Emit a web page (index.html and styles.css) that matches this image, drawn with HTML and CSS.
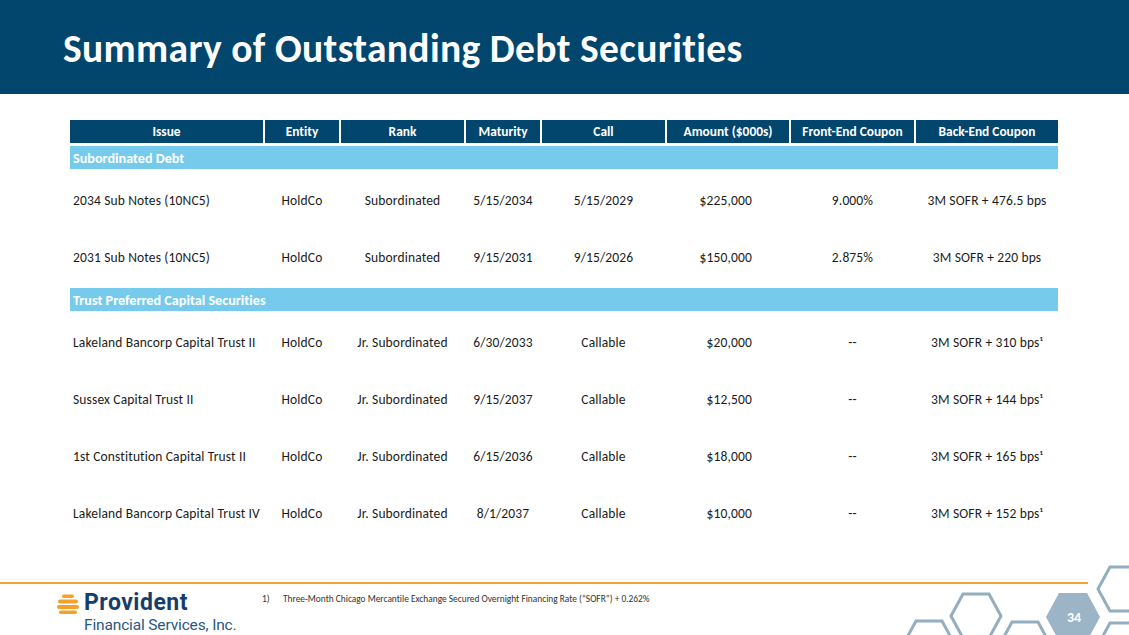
FILE: index.html
```html
<!DOCTYPE html>
<html lang="en">
<head>
<meta charset="utf-8">
<title>Summary of Outstanding Debt Securities</title>
<link rel="stylesheet" href="styles.css">
</head>
<body>
<div class="slide">
  <header class="banner">
    <h1 class="title">Summary of Outstanding Debt Securities</h1>
  </header>

  <main class="content">
    <div class="debt-table">
      <div class="row head-row">
        <div class="cell issue">Issue</div>
        <div class="cell">Entity</div>
        <div class="cell">Rank</div>
        <div class="cell">Maturity</div>
        <div class="cell">Call</div>
        <div class="cell">Amount ($000s)</div>
        <div class="cell">Front-End Coupon</div>
        <div class="cell">Back-End Coupon</div>
      </div>

      <section class="group first">
        <div class="band">Subordinated Debt</div>
        <div class="row data-row">
          <div class="cell issue">2034 Sub Notes (10NC5)</div>
          <div class="cell">HoldCo</div>
          <div class="cell">Subordinated</div>
          <div class="cell">5/15/2034</div>
          <div class="cell">5/15/2029</div>
          <div class="cell amount">$225,000</div>
          <div class="cell">9.000%</div>
          <div class="cell">3M SOFR + 476.5 bps</div>
        </div>
        <div class="row data-row">
          <div class="cell issue">2031 Sub Notes (10NC5)</div>
          <div class="cell">HoldCo</div>
          <div class="cell">Subordinated</div>
          <div class="cell">9/15/2031</div>
          <div class="cell">9/15/2026</div>
          <div class="cell amount">$150,000</div>
          <div class="cell">2.875%</div>
          <div class="cell">3M SOFR + 220 bps</div>
        </div>
      </section>

      <section class="group">
        <div class="band">Trust Preferred Capital Securities</div>
        <div class="row data-row">
          <div class="cell issue">Lakeland Bancorp Capital Trust II</div>
          <div class="cell">HoldCo</div>
          <div class="cell">Jr. Subordinated</div>
          <div class="cell">6/30/2033</div>
          <div class="cell">Callable</div>
          <div class="cell amount">$20,000</div>
          <div class="cell">--</div>
          <div class="cell">3M SOFR + 310 bps¹</div>
        </div>
        <div class="row data-row">
          <div class="cell issue">Sussex Capital Trust II</div>
          <div class="cell">HoldCo</div>
          <div class="cell">Jr. Subordinated</div>
          <div class="cell">9/15/2037</div>
          <div class="cell">Callable</div>
          <div class="cell amount">$12,500</div>
          <div class="cell">--</div>
          <div class="cell">3M SOFR + 144 bps¹</div>
        </div>
        <div class="row data-row">
          <div class="cell issue">1st Constitution Capital Trust II</div>
          <div class="cell">HoldCo</div>
          <div class="cell">Jr. Subordinated</div>
          <div class="cell">6/15/2036</div>
          <div class="cell">Callable</div>
          <div class="cell amount">$18,000</div>
          <div class="cell">--</div>
          <div class="cell">3M SOFR + 165 bps¹</div>
        </div>
        <div class="row data-row">
          <div class="cell issue">Lakeland Bancorp Capital Trust IV</div>
          <div class="cell">HoldCo</div>
          <div class="cell">Jr. Subordinated</div>
          <div class="cell">8/1/2037</div>
          <div class="cell">Callable</div>
          <div class="cell amount">$10,000</div>
          <div class="cell">--</div>
          <div class="cell">3M SOFR + 152 bps¹</div>
        </div>
      </section>
    </div>
  </main>

  <footer class="footer">
    <div class="footer-line"></div>
    <div class="footer-body">
      <div class="logo">
        <svg class="logo-mark" viewBox="0 0 24 24" width="24" height="24" aria-hidden="true">
          <rect x="6" y="1.5" width="12" height="3.6" rx="1.8" fill="#F3A129"/>
          <rect x="2" y="6.6" width="20" height="4" rx="2" fill="#F3A129"/>
          <rect x="1" y="12" width="22" height="4" rx="2" fill="#F3A129"/>
          <rect x="3" y="17.4" width="18" height="3.6" rx="1.8" fill="#F3A129"/>
        </svg>
        <div class="logo-text">
          <div class="logo-name">Provident</div>
          <div class="logo-sub">Financial Services, Inc.</div>
        </div>
      </div>
      <p class="footnote"><span class="fn-num">1)</span>Three-Month Chicago Mercantile Exchange Secured Overnight Financing Rate (“SOFR”) + 0.262%</p>
    </div>
    <svg class="hexes" viewBox="900 555 229 80" width="229" height="80" aria-hidden="true">
      <g fill="none" stroke="#93AEC0" stroke-width="3" stroke-linejoin="miter">
        <polygon points="904,643 916,621 942,621 954,643 942,665 916,665"/>
        <polygon points="951,616 963,594 989,594 1001,616 989,638 963,638"/>
        <polygon points="1000,644 1012,622 1038,622 1050,644 1038,666 1012,666"/>
        <polygon points="1098,589 1110,567 1136,567 1148,589 1136,611 1110,611"/>
        <polygon points="1098,645 1110,623 1136,623 1148,645 1136,667 1110,667"/>
      </g>
      <polygon points="1046,617 1059,593 1087,593 1100,617 1087,641 1059,641" fill="#9BB4C6"/>
      <text x="1074" y="619" text-anchor="middle" dominant-baseline="middle" class="page-num">34</text>
    </svg>
  </footer>
</div>
</body>
</html>
```

FILE: styles.css
```css
* { box-sizing: border-box; }

html, body {
  margin: 0;
  padding: 0;
  background: #ffffff;
}

.slide {
  position: relative;
  width: 1129px;
  height: 635px;
  overflow: hidden;
  display: flex;
  flex-direction: column;
  font-family: Carlito, Lato, "Liberation Sans", sans-serif;
  font-variant-ligatures: none;
  color: #1b1b1b;
}

.banner {
  height: 94px;
  flex: 0 0 94px;
  background: #02456D;
  display: flex;
  align-items: center;
  padding-left: 63px;
}

.title {
  margin: 0;
  color: #ffffff;
  font-size: 39.5px;
  font-weight: 700;
  line-height: 1;
  letter-spacing: 0.35px;
  padding-top: 4px;
}

.content {
  flex: 1 1 auto;
  padding: 26px 0 0 70px;
}

.debt-table {
  width: 988px;
}

.row {
  display: grid;
  grid-template-columns: 193px 74px 123px 74px 123px 122px 123px 142px;
  column-gap: 2px;
}

.cell {
  text-align: center;
  white-space: nowrap;
  font-size: 13.5px;
  letter-spacing: 0.15px;
}

.cell.issue {
  text-align: left;
  padding-left: 3px;
}

.head-row {
  height: 23px;
}

.head-row .cell {
  background: #02456D;
  color: #ffffff;
  font-weight: 700;
  font-size: 13.4px;
  letter-spacing: 0;
  display: flex;
  align-items: center;
  justify-content: center;
}

.head-row .cell.issue {
  padding-left: 0;
}

.group {
  margin-top: 2px;
}

.group.first {
  margin-top: 3px;
}

.band {
  height: 23px;
  background: #76CBED;
  color: #ffffff;
  font-weight: 700;
  font-size: 14.2px;
  display: flex;
  align-items: center;
  padding-left: 3px;
  margin-bottom: 3px;
}

.data-row {
  height: 57px;
  align-items: center;
}

.cell.amount {
  text-align: right;
  padding-right: 37px;
}

.footer {
  flex: 0 0 53px;
  position: relative;
}

.footer-line {
  width: 1088px;
  height: 2px;
  background: #F0A43A;
}

.footer-body {
  display: flex;
  align-items: flex-start;
  padding-left: 56px;
}

.logo {
  display: flex;
  align-items: flex-start;
  margin-top: 5px;
  width: 206px;
}

.logo-mark {
  margin-top: 4px;
  margin-right: 4px;
  flex: 0 0 auto;
}

.logo-text {
  display: flex;
  flex-direction: column;
}

.logo-name {
  font-family: Roboto, "Liberation Sans", sans-serif;
  font-weight: 700;
  font-size: 23px;
  line-height: normal;
  color: #173D6B;
  letter-spacing: 0.5px;
}

.logo-sub {
  font-family: Roboto, "Liberation Sans", sans-serif;
  font-size: 15.5px;
  line-height: normal;
  color: #2A5784;
  letter-spacing: -0.15px;
}

.footnote {
  margin: 9px 0 0 0;
  font-size: 9.4px;
  color: #333333;
  white-space: nowrap;
}

.fn-num {
  display: inline-block;
  width: 21px;
}

.hexes {
  position: absolute;
  right: 0;
  bottom: 0;
}

.page-num {
  font-family: Carlito, Lato, "Liberation Sans", sans-serif;
  font-weight: 700;
  font-size: 14px;
  fill: #ffffff;
}
```
